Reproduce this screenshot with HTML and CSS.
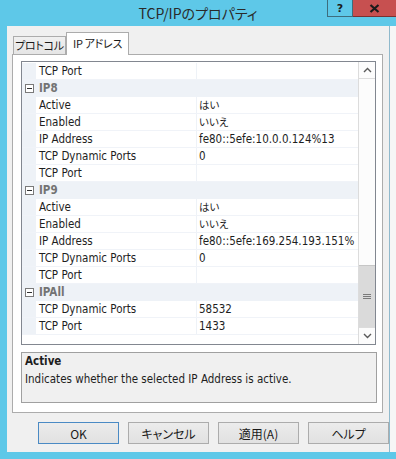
FILE: index.html
```html
<!DOCTYPE html>
<html lang="ja">
<head>
<meta charset="utf-8">
<title>TCP/IPのプロパティ</title>
<link rel="stylesheet" href="styles.css">
</head>
<body>
<div class="window">
  <div class="titlebar">
    <div class="title">TCP/IPのプロパティ</div>
    <div class="caption-buttons">
      <div class="cb help">?</div>
      <div class="cb close">
        <svg width="11" height="9" viewBox="0 0 11 9"><path d="M1.5 1 L9.5 8 M9.5 1 L1.5 8" stroke="#1b1b1b" stroke-width="2.2" fill="none"/></svg>
      </div>
    </div>
  </div>
  <div class="frame">
    <div class="client">
      <div class="tabs">
        <div class="tab">プロトコル</div>
        <div class="tab active">IP アドレス</div>
      </div>
      <div class="tabpage">
        <div class="grid">
          <div class="rows">
            <div class="row prop"><span class="gut"></span><span class="name">TCP Port</span><span class="val"></span></div>
            <div class="row cat"><span class="minus"></span><span class="catname">IP8</span></div>
            <div class="row prop"><span class="gut"></span><span class="name">Active</span><span class="val jp">はい</span></div>
            <div class="row prop"><span class="gut"></span><span class="name">Enabled</span><span class="val jp">いいえ</span></div>
            <div class="row prop"><span class="gut"></span><span class="name">IP Address</span><span class="val">fe80::5efe:10.0.0.124%13</span></div>
            <div class="row prop"><span class="gut"></span><span class="name">TCP Dynamic Ports</span><span class="val">0</span></div>
            <div class="row prop"><span class="gut"></span><span class="name">TCP Port</span><span class="val"></span></div>
            <div class="row cat"><span class="minus"></span><span class="catname">IP9</span></div>
            <div class="row prop"><span class="gut"></span><span class="name">Active</span><span class="val jp">はい</span></div>
            <div class="row prop"><span class="gut"></span><span class="name">Enabled</span><span class="val jp">いいえ</span></div>
            <div class="row prop"><span class="gut"></span><span class="name">IP Address</span><span class="val">fe80::5efe:169.254.193.151%</span></div>
            <div class="row prop"><span class="gut"></span><span class="name">TCP Dynamic Ports</span><span class="val">0</span></div>
            <div class="row prop"><span class="gut"></span><span class="name">TCP Port</span><span class="val"></span></div>
            <div class="row cat"><span class="minus"></span><span class="catname">IPAll</span></div>
            <div class="row prop"><span class="gut"></span><span class="name">TCP Dynamic Ports</span><span class="val">58532</span></div>
            <div class="row prop"><span class="gut"></span><span class="name">TCP Port</span><span class="val">1433</span></div>
          </div>
          <div class="scrollbar">
            <div class="sb-arrow up">
              <svg width="9" height="6" viewBox="0 0 9 6"><polyline points="1,5 4.5,1.5 8,5" stroke="#5a5a5a" stroke-width="1.4" fill="none"/></svg>
            </div>
            <div class="sb-track"></div>
            <div class="sb-thumb">
              <svg width="8" height="7" viewBox="0 0 8 7"><path d="M0 1.5H8M0 3.5H8M0 5.5H8" stroke="#7a7a7a" stroke-width="1"/></svg>
            </div>
            <div class="sb-arrow down">
              <svg width="9" height="6" viewBox="0 0 9 6"><polyline points="1,1 4.5,4.5 8,1" stroke="#5a5a5a" stroke-width="1.4" fill="none"/></svg>
            </div>
          </div>
        </div>
        <div class="desc">
          <div class="desc-title">Active</div>
          <div class="desc-text">Indicates whether the selected IP Address is active.</div>
        </div>
      </div>
      <div class="buttons">
        <div class="btn default">OK</div>
        <div class="btn">キャンセル</div>
        <div class="btn">適用(A)</div>
        <div class="btn">ヘルプ</div>
      </div>
    </div>
  </div>
</div>
</body>
</html>
```

FILE: styles.css
```css
html, body {
  margin: 0;
  padding: 0;
  overflow: hidden;
  background: #5ec8e8;
}

.window {
  width: 396px;
  height: 459px;
  background: #5ec8e8;
  display: flex;
  flex-direction: column;
  font-family: "DejaVu Sans Condensed", "Noto Sans CJK JP", sans-serif;
  font-size: 11.5px;
  color: #1e1e1e;
}

.titlebar {
  height: 26px;
  display: flex;
  padding-left: 69px;
  box-sizing: border-box;
}

.title {
  flex: 1;
  text-align: center;
  font-family: "Noto Sans CJK JP", sans-serif;
  font-feature-settings: "palt";
  font-size: 14px;
  line-height: 26px;
  color: #2a2a2a;
}

.caption-buttons {
  display: flex;
  align-self: flex-start;
}

.cb {
  height: 17px;
  box-sizing: border-box;
  display: flex;
  align-items: center;
  justify-content: center;
  border-bottom: 1px solid #3d6d7d;
}

.help {
  width: 26px;
  border-left: 1px solid #3d6d7d;
  border-right: 1px solid #3d6d7d;
  font-family: "DejaVu Sans", sans-serif;
  font-weight: bold;
  font-size: 11px;
  color: #1b1b1b;
}

.close {
  width: 43px;
  background: #c75050;
  border-bottom-color: #7a3030;
}

.frame {
  flex: 1;
  display: flex;
  padding: 0 0 7px 7px;
}

.client {
  width: 382px;
  background: #f0f0f0;
  border-right: 1px solid #8fb9cc;
  display: flex;
  flex-direction: column;
}

.frame::after {
  content: "";
  flex: 1;
  background: #f6f6f6;
}

.tabs {
  height: 28px;
  display: flex;
  align-items: flex-end;
  padding-left: 6px;
  box-sizing: border-box;
  position: relative;
  z-index: 1;
}

.tab {
  height: 18px;
  box-sizing: border-box;
  border: 1px solid #acacac;
  border-bottom: none;
  background: linear-gradient(#f0f0f0, #e5e5e5);
  font-family: "Noto Sans CJK JP", sans-serif;
  font-feature-settings: "palt";
  font-size: 11px;
  letter-spacing: -0.3px;
  line-height: 16px;
  color: #1a1a1a;
  width: 53px;
  text-align: center;
  white-space: nowrap;
}

.tab.active {
  height: 23px;
  margin-bottom: -1px;
  width: 63px;
  background: #ffffff;
  line-height: 20px;
}

.tabpage {
  margin-left: 5px;
  width: 371px;
  height: 359px;
  box-sizing: border-box;
  border: 1px solid #acacac;
  background: #ffffff;
  padding: 6px 6px 0 8px;
  display: flex;
  flex-direction: column;
}

.grid {
  height: 284px;
  width: 355px;
  box-sizing: border-box;
  border: 1px solid #828790;
  display: flex;
  background: #ffffff;
}

.rows {
  flex: 1;
  padding-top: 1px;
  overflow: hidden;
}

.row {
  height: 17px;
  box-sizing: border-box;
  border-bottom: 1px solid #f0f3f8;
  display: flex;
  line-height: 16px;
  white-space: nowrap;
}

.gut {
  width: 14px;
  background: #eef2f7;
  flex: none;
}

.name {
  width: 161px;
  flex: none;
  padding-left: 3px;
  box-sizing: border-box;
  border-right: 1px solid #eef2f7;
  overflow: hidden;
}

.val {
  flex: 1;
  padding-left: 2px;
  overflow: hidden;
}

.val.jp {
  font-family: "Noto Sans CJK JP", sans-serif;
  font-feature-settings: "palt";
  font-size: 10.5px;
}

.row.cat {
  background: #eef2f7;
  border-bottom-color: #eef2f7;
  align-items: center;
}

.minus {
  width: 9px;
  height: 9px;
  box-sizing: border-box;
  border: 1px solid #7a7a7a;
  background: #ffffff;
  margin-left: 3px;
  position: relative;
  flex: none;
}

.minus::after {
  content: "";
  position: absolute;
  left: 1px;
  top: 3px;
  width: 5px;
  height: 1px;
  background: #303030;
}

.catname {
  margin-left: 5px;
  font-weight: bold;
  color: #737373;
}

.scrollbar {
  width: 17px;
  flex: none;
  display: flex;
  flex-direction: column;
  background: #fcfcfc;
  border-left: 1px solid #dcdcdc;
  box-sizing: border-box;
}

.sb-arrow {
  height: 17px;
  display: flex;
  align-items: center;
  justify-content: center;
  box-sizing: border-box;
}

.sb-arrow.up {
  border-bottom: 1px solid #dcdcdc;
}

.sb-arrow.down {
  border-top: 1px solid #dcdcdc;
}

.sb-track {
  flex: 1;
}

.sb-thumb {
  height: 62px;
  background: #dadada;
  border-top: 1px solid #c6c6c6;
  box-sizing: border-box;
  display: flex;
  align-items: center;
  justify-content: center;
}

.desc {
  margin-top: 7px;
  height: 51px;
  width: 356px;
  box-sizing: border-box;
  border: 1px solid #a0a0a0;
  background: #f0f0f0;
  padding: 0 3px;
}

.desc-title {
  font-weight: bold;
  line-height: 16px;
  margin-bottom: 2px;
}

.desc-text {
  line-height: 16px;
}

.buttons {
  margin-top: 9px;
  padding-left: 31px;
  display: flex;
  gap: 9px;
}

.btn {
  width: 81px;
  height: 22px;
  box-sizing: border-box;
  border: 1px solid #acacac;
  background: linear-gradient(#ececec, #e1e1e1);
  display: flex;
  align-items: center;
  justify-content: center;
  font-family: "Noto Sans CJK JP", sans-serif;
  font-feature-settings: "palt";
  font-size: 12px;
  color: #1a1a1a;
}

.btn.default {
  border-color: #4a8ac4;
}
```
